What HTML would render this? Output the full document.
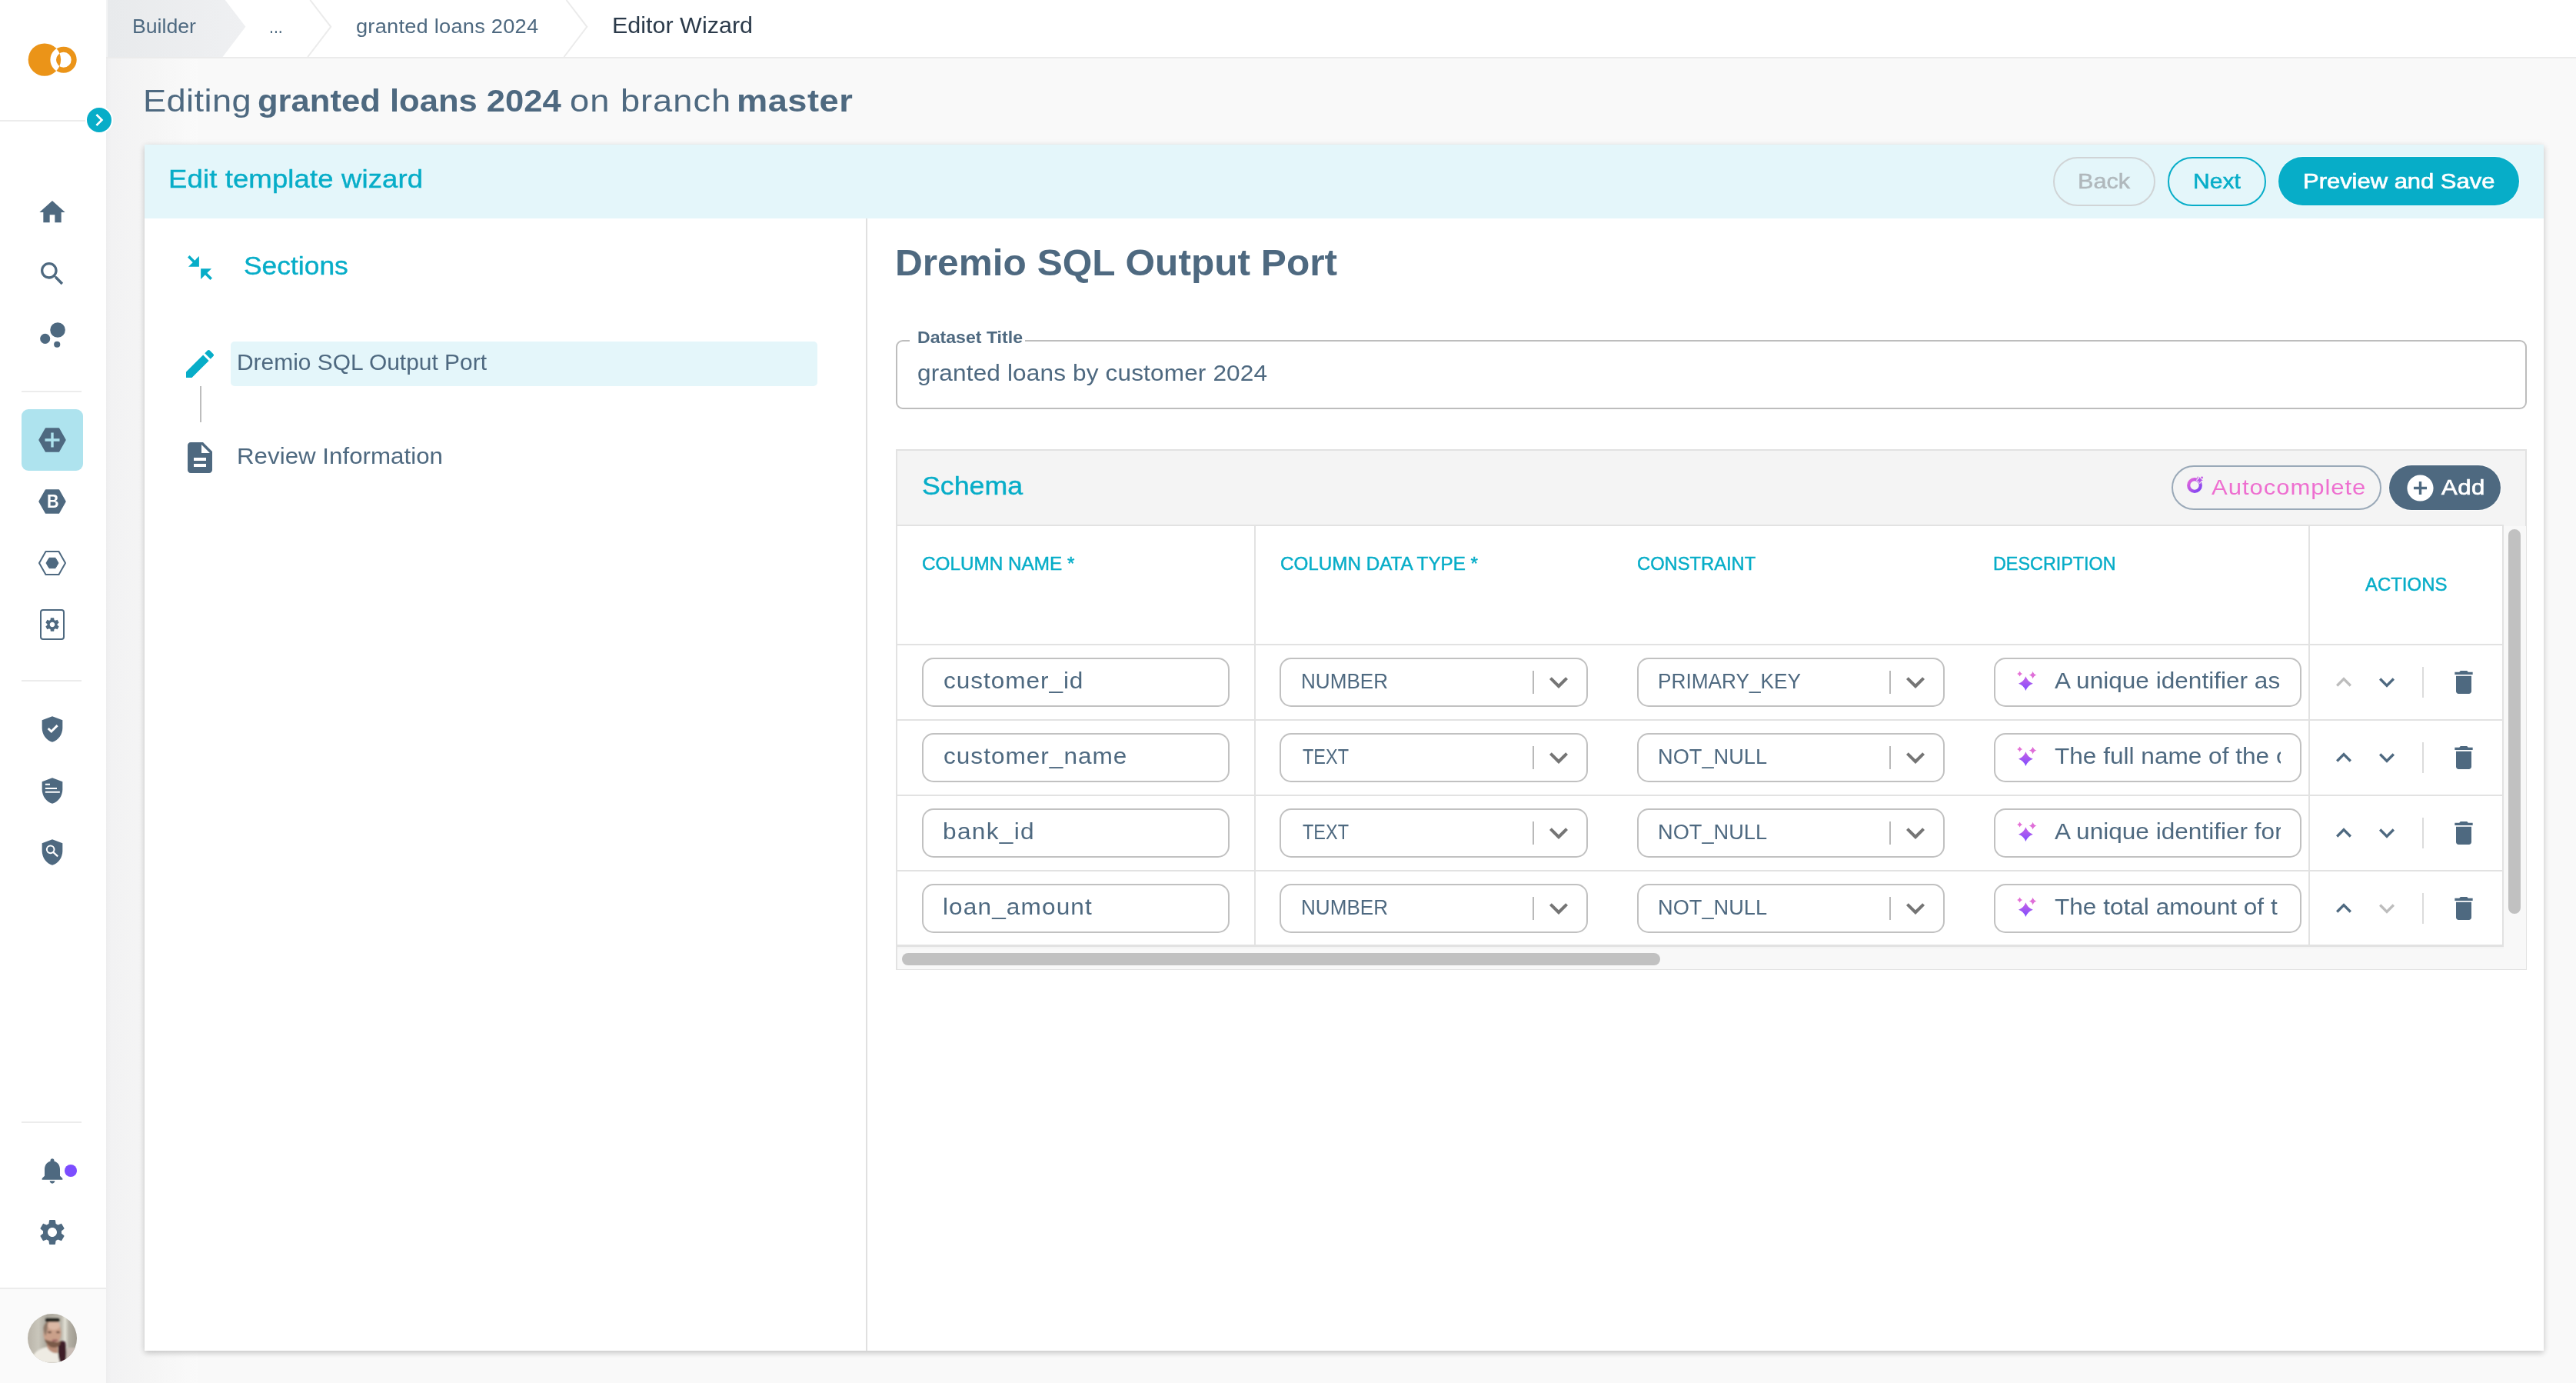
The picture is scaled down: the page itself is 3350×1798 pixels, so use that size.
<!DOCTYPE html>
<html lang="en">
<head>
<meta charset="utf-8">
<title>Editor Wizard</title>
<style>
html,body{margin:0;padding:0;}
body{width:3350px;height:1798px;overflow:hidden;position:relative;background:#f9f9f9;font-family:"Liberation Sans",sans-serif;color:#4e6980;}
.a{position:absolute;box-sizing:border-box;}
.t{position:absolute;white-space:nowrap;line-height:1;color:#4e6980;transform-origin:0 50%;}
svg{position:absolute;display:block;overflow:visible;}
.ic{fill:#4e6980;}
/* sidebar */
#side{left:0;top:0;width:138px;height:1798px;background:#fff;}
#sideshadow{left:138px;top:76px;width:120px;height:1722px;background:linear-gradient(90deg,#eeeeef 0,#f2f2f3 6%,#f5f5f5 45%,#fafafa 100%);}
#sidefoot{left:0;top:1674px;width:138px;height:124px;background:#fafafa;border-top:2px solid #ececec;}
.sdiv{left:28px;width:78px;height:2px;background:#ececec;}
#active{left:28px;top:532px;width:80px;height:80px;border-radius:9px;background:#aee3ee;}
#toggle{left:111px;top:138px;width:36px;height:36px;border-radius:50%;background:#07adc8;border:2px solid #fff;}
#avatar{left:36px;top:1708px;width:64px;height:64px;border-radius:50%;overflow:hidden;background:#b9b3a8;}
/* breadcrumb */
#crumb{left:138px;top:0;width:3212px;height:76px;background:#fff;border-bottom:2px solid #ebebeb;}
/* card */
#card{left:188px;top:188px;width:3120px;height:1568px;background:#fff;box-shadow:0 3px 7px rgba(0,0,0,.16),0 1px 10px rgba(0,0,0,.07);}
#cardhead{left:188px;top:188px;width:3120px;height:96px;background:#e4f6fa;}
#vdiv{left:1126px;top:284px;width:2px;height:1472px;background:#e0e0e0;}
.btn{border-radius:40px;height:64px;top:204px;}
#bback{left:2670px;width:133px;border:2px solid #d0d4d6;}
#bnext{left:2819px;width:128px;border:2px solid #07adc8;}
#bsave{left:2963px;width:313px;background:#07adc8;height:63px;box-shadow:0 0 0 1px #eefafc;}
/* sections */
#hl{left:300px;top:444px;width:763px;height:58px;border-radius:5px;background:#e4f6fa;}
#conn{left:260px;top:502px;width:2px;height:47px;background:#bdbdbd;}
/* form */
#dsbox{left:1165px;top:442px;width:2121px;height:90px;border:2px solid #bdbdbd;border-radius:9px;}
#dsnotch{left:1183px;top:440px;width:150px;height:6px;background:#fff;}
#schema{left:1165px;top:584px;width:2121px;height:677px;background:#f4f4f4;border:2px solid #e2e2e2;}
#grid{left:1167px;top:682px;width:2089px;height:549px;background:#fff;border-top:2px solid #e2e2e2;border-bottom:3px solid #e2e2e2;border-right:2px solid #e2e2e2;}
#hsb{left:1167px;top:1233px;width:2118px;height:27px;background:#f8f8f8;}
#hthumb{left:1173px;top:1239px;width:986px;height:16px;border-radius:8px;background:#c1c1c1;}
#vsb{left:3256px;top:684px;width:29px;height:549px;background:#f8f8f8;}
#vthumb{left:3262px;top:688px;width:16px;height:500px;border-radius:8px;background:#c1c1c1;}
.hline{left:1167px;width:2088px;height:2px;background:#e2e2e2;}
.vline{top:684px;width:2px;height:546px;background:#e2e2e2;}
.inp{height:64px;border:2px solid #c1c1c1;border-radius:15px;background:#fff;}
.sep{width:2px;height:30px;background:#b9b9b9;}
.asep{width:2px;height:40px;background:#dcdcdc;left:3150px;}
#bauto{left:2824px;top:605px;width:273px;height:58px;border-radius:30px;border:2px solid #9aa9b8;}
#badd{left:3107px;top:605px;width:145px;height:58px;border-radius:30px;background:#4e6980;box-shadow:0 0 0 1px #fbfbfb;}
#texts{position:absolute;left:0;top:0;width:3350px;height:1798px;will-change:transform;}

</style>
</head>
<body>
<div id="sideshadow" class="a"></div>
<div id="crumb" class="a"></div>
<svg width="900" height="76" viewBox="0 0 900 76" style="left:138px;top:0"><defs><linearGradient id="cg" x1="0" x2="1" y1="0" y2="0"><stop offset="0" stop-color="#e8eaec"/><stop offset="1" stop-color="#eff0f2"/></linearGradient></defs><rect x="0" y="0" width="2" height="74" fill="#f3f4f5"/><polygon points="2,0 154.7,0 181.4,34.8 151.6,74 2,74" fill="url(#cg)"/><polyline points="265.3,0 292.2,34.8 262.2,74" fill="none" stroke="#ebebeb" stroke-width="2"/><polyline points="598.5,0 625.3,34.8 595.5,74" fill="none" stroke="#ebebeb" stroke-width="2"/></svg>
<div id="side" class="a"></div>
<div id="sidefoot" class="a"></div>
<div class="a" style="left:0;top:156px;width:138px;height:2px;background:#ececec"></div>
<svg width="70" height="50" viewBox="30 52 70 50" style="left:30px;top:52px"><defs><clipPath id="lc"><circle cx="57.9" cy="77.6" r="21.2"/></clipPath></defs><circle cx="57.9" cy="77.6" r="21.2" fill="#eb9418"/><circle cx="82.7" cy="77.8" r="13.5" fill="none" stroke="#eb9418" stroke-width="7"/><circle cx="82.7" cy="77.8" r="13.5" fill="none" stroke="#fff" stroke-width="7.6" clip-path="url(#lc)"/></svg>
<div id="toggle" class="a"></div>
<svg class="ic" viewBox="0 0 24 24" width="32" height="32" style="left:113.2px;top:140.0px"><path d="M10 6 8.59 7.41 13.17 12l-4.58 4.59L10 18l6-6z" style="fill:#fff"/></svg>
<div class="a sdiv" style="top:508px"></div>
<div class="a sdiv" style="top:884px"></div>
<div class="a sdiv" style="top:1458px"></div>
<div id="active" class="a"></div>
<svg class="ic" viewBox="0 0 24 24" width="40" height="40" style="left:48.0px;top:256.0px"><path d="M10 20v-6h4v6h5v-8h3L12 3 2 12h3v8z"/></svg>
<svg class="ic" viewBox="0 0 24 24" width="40" height="40" style="left:48.0px;top:336.0px"><path d="M15.5 14h-.79l-.28-.27C15.41 12.59 16 11.11 16 9.5 16 5.91 13.09 3 9.5 3S3 5.91 3 9.5 5.91 16 9.5 16c1.61 0 3.09-.59 4.23-1.57l.27.28v.79l5 4.99L20.49 19l-4.99-5zm-6 0C7.01 14 5 11.99 5 9.5S7.01 5 9.5 5 14 7.01 14 9.5 11.99 14 9.5 14z"/></svg>
<svg class="ic" viewBox="0 0 24 24" width="49" height="49" style="left:43.7px;top:411.2px"><circle cx="7.2" cy="14.4" r="3.2"/><circle cx="14.8" cy="18" r="2"/><circle cx="15.2" cy="8.8" r="4.8"/></svg>
<svg width="44" height="40" viewBox="46 552 44 40" style="left:46px;top:552px"><polygon points="51.3,572 59.65,557.3 76.35,557.3 84.7,572 76.35,586.7 59.65,586.7" fill="#4e6980" stroke="#4e6980" stroke-width="2" stroke-linejoin="round"/><path d="M66.3 562.5h3.4v7.8h7.8v3.4h-7.8v7.8h-3.4v-7.8h-7.8v-3.4h7.8z" fill="#aee3ee"/></svg>
<svg width="44" height="40" viewBox="46 632 44 40" style="left:46px;top:632px"><polygon points="51.3,652 59.65,637.3 76.35,637.3 84.7,652 76.35,666.7 59.65,666.7" fill="#4e6980" stroke="#4e6980" stroke-width="2" stroke-linejoin="round"/></svg>
<svg width="44" height="40" viewBox="46 712 44 40" style="left:46px;top:712px"><polygon points="51.0,732 59.5,717.0 76.5,717.0 85.0,732 76.5,747.0 59.5,747.0" fill="#fff" stroke="#4e6980" stroke-width="2" stroke-linejoin="round"/><polygon points="60.0,732 64.0,725.3 72.0,725.3 76.0,732 72.0,738.7 64.0,738.7" fill="#4e6980" stroke="#4e6980" stroke-width="1" stroke-linejoin="round"/></svg>
<div class="a" style="left:52px;top:792px;width:32px;height:40px;border:2px solid #4e6980;border-radius:4px"></div>
<svg class="ic" viewBox="0 0 24 24" width="22" height="22" style="left:57.0px;top:801.0px"><path d="M19.14 12.94c.04-.3.06-.61.06-.94 0-.32-.02-.64-.07-.94l2.03-1.58c.18-.14.23-.41.12-.61l-1.92-3.32c-.12-.22-.37-.29-.59-.22l-2.39.96c-.5-.38-1.03-.7-1.62-.94l-.36-2.54c-.04-.24-.24-.41-.48-.41h-3.84c-.24 0-.43.17-.47.41l-.36 2.54c-.59.24-1.13.57-1.62.94l-2.39-.96c-.22-.08-.47 0-.59.22L2.74 8.87c-.12.21-.08.47.12.61l2.03 1.58c-.05.3-.09.63-.09.94s.02.64.07.94l-2.03 1.58c-.18.14-.23.41-.12.61l1.92 3.32c.12.22.37.29.59.22l2.39-.96c.5.38 1.03.7 1.62.94l.36 2.54c.05.24.24.41.48.41h3.84c.24 0 .44-.17.47-.41l.36-2.54c.59-.24 1.13-.56 1.62-.94l2.39.96c.22.08.47 0 .59-.22l1.92-3.32c.12-.22.07-.47-.12-.61l-2.01-1.58zM12 15.6c-1.98 0-3.6-1.62-3.6-3.6s1.62-3.6 3.6-3.6 3.6 1.62 3.6 3.6-1.62 3.6-3.6 3.6z"/></svg>
<svg class="ic" viewBox="0 0 24 24" width="40" height="40" style="left:48.0px;top:928.0px"><path d="M12 2 4 5v6.09c0 5.050 3.410 9.760 8 10.910 4.590-1.150 8-5.860 8-10.910V5l-8-3zm-.76 13.040L8.200 12l1.210-1.210 1.820 1.820 4.140-4.140 1.210 1.210-5.340 5.360z"/></svg>
<svg class="ic" viewBox="0 0 24 24" width="40" height="40" style="left:48px;top:1008px"><path d="M12 2 4 5v6.09c0 5.05 3.41 9.76 8 10.91 4.59-1.15 8-5.86 8-10.91V5l-8-3z"/><path d="M6.500 6.400h3.700v1.200H6.500zM6.500 9.600h9.100v1.200H6.500zM6.500 12.400h11.400v1.200H6.500z" style="fill:#fff"/></svg>
<svg class="ic" viewBox="0 0 24 24" width="40" height="40" style="left:48px;top:1088px"><path d="M12 2 4 5v6.09c0 5.05 3.41 9.76 8 10.91 4.59-1.15 8-5.86 8-10.91V5l-8-3z"/><circle cx="10.600" cy="9.800" r="2.900" stroke="#fff" stroke-width="1.200" style="fill:none"/><path d="M12.700 11.900l3.600 3.300" stroke="#fff" stroke-width="1.300" style="fill:none"/></svg>
<svg class="ic" viewBox="0 0 24 24" width="40" height="40" style="left:48.0px;top:1502.0px"><path d="M12 22c1.1 0 2-.9 2-2h-4c0 1.1.89 2 2 2zm6-6v-5c0-3.07-1.64-5.64-4.5-6.32V4c0-.83-.67-1.5-1.5-1.5s-1.5.67-1.5 1.5v.68C7.63 5.36 6 7.92 6 11v5l-2 2v1h16v-1l-2-2z"/></svg>
<div class="a" style="left:84px;top:1514px;width:16px;height:16px;border-radius:50%;background:#7c4dff"></div>
<svg class="ic" viewBox="0 0 24 24" width="40" height="40" style="left:48.0px;top:1582.0px"><path d="M19.14 12.94c.04-.3.06-.61.06-.94 0-.32-.02-.64-.07-.94l2.03-1.58c.18-.14.23-.41.12-.61l-1.92-3.32c-.12-.22-.37-.29-.59-.22l-2.39.96c-.5-.38-1.03-.7-1.62-.94l-.36-2.54c-.04-.24-.24-.41-.48-.41h-3.84c-.24 0-.43.17-.47.41l-.36 2.54c-.59.24-1.13.57-1.62.94l-2.39-.96c-.22-.08-.47 0-.59.22L2.74 8.87c-.12.21-.08.47.12.61l2.03 1.58c-.05.3-.09.63-.09.94s.02.64.07.94l-2.03 1.58c-.18.14-.23.41-.12.61l1.92 3.32c.12.22.37.29.59.22l2.39-.96c.5.38 1.03.7 1.62.94l.36 2.54c.05.24.24.41.48.41h3.84c.24 0 .44-.17.47-.41l.36-2.54c.59-.24 1.13-.56 1.62-.94l2.39.96c.22.08.47 0 .59-.22l1.92-3.32c.12-.22.07-.47-.12-.61l-2.01-1.58zM12 15.6c-1.98 0-3.6-1.62-3.6-3.6s1.62-3.6 3.6-3.6 3.6 1.62 3.6 3.6-1.62 3.6-3.6 3.6z"/></svg>
<svg width="64" height="64" viewBox="0 0 64 64" style="left:36px;top:1708px"><defs><clipPath id="avc"><circle cx="32" cy="32" r="32"/></clipPath><filter id="avb" x="-10%" y="-10%" width="120%" height="120%"><feGaussianBlur stdDeviation="1.1"/></filter><linearGradient id="avg" x1="0" x2="1" y1="0" y2="0"><stop offset="0" stop-color="#b9b4a9"/><stop offset=".22" stop-color="#c9c6bb"/><stop offset=".4" stop-color="#aaa69b"/><stop offset=".68" stop-color="#bcb8ad"/><stop offset=".76" stop-color="#e0dfd4"/><stop offset=".84" stop-color="#b3afa4"/><stop offset="1" stop-color="#9f9a90"/></linearGradient></defs><g clip-path="url(#avc)"><rect width="64" height="64" fill="url(#avg)"/><g filter="url(#avb)"><rect x="44" y="44" width="22" height="22" fill="#c9bdb6"/><path d="M40 37c3-2 7-2 9 0c1 8 2 16 0 25l-9 4z" fill="#3d1f27"/><rect x="25" y="38" width="14" height="14" fill="#b98d78"/><path d="M4 64C6 52 12 46 25 43c3 6 9 9 14 8l3 13z" fill="#eeebe3"/><ellipse cx="32" cy="25" rx="11.5" ry="16" fill="#caa08a"/><ellipse cx="34" cy="15" rx="8" ry="6" fill="#dbb8a4"/><path d="M20.500 18c1-4 3-7 6-9l-1 12-2 8c-2-3-3-7-3-11z" fill="#8f7868"/><path d="M22 33c2 6 6 11 12 11s9-4 9-9c-3 3-6 2-9 1-4 0-8-1-12-3z" fill="#7a5a49"/><ellipse cx="35.500" cy="34.500" rx="4" ry="1.600" fill="#a06a66"/><ellipse cx="28.500" cy="24" rx="2.600" ry="1.200" fill="#5d4236"/><ellipse cx="39.500" cy="24" rx="2.400" ry="1.200" fill="#5d4236"/><rect x="23" y="6" width="18.500" height="4.600" rx="2" fill="#23221f"/></g></g></svg>
<div id="card" class="a"></div>
<div id="cardhead" class="a"></div>
<div id="vdiv" class="a"></div>
<div id="bback" class="a btn"></div><div id="bnext" class="a btn"></div><div id="bsave" class="a btn"></div>
<svg width="40" height="40" viewBox="-20 -20 40 40" style="left:240px;top:328px"><g fill="#07adc8" stroke="#07adc8"><polygon points="-1.1,-15 -1.1,-1.2 -15,-1.2" stroke="none"/><path d="M-14.7 -14.7L-6 -6" stroke-width="3.6" fill="none"/><polygon points="1.1,15 1.1,1.200 15,1.200" stroke="none"/><path d="M14.7 14.7L6 6" stroke-width="3.6" fill="none"/></g></svg>
<div id="hl" class="a"></div>
<svg class="ic" viewBox="0 0 24 24" width="48" height="48" style="left:236.0px;top:448.7px"><path d="M3 17.25V21h3.75L17.81 9.94l-3.75-3.75L3 17.25zM20.71 7.04c.39-.39.39-1.02 0-1.41l-2.34-2.34c-.39-.39-1.02-.39-1.41 0l-1.83 1.83 3.75 3.75 1.83-1.83z" style="fill:#07adc8"/></svg>
<div id="conn" class="a"></div>
<svg class="ic" viewBox="0 0 24 24" width="48" height="48" style="left:236.0px;top:571.0px"><path d="M14 2H6c-1.1 0-1.99.9-1.99 2L4 20c0 1.1.89 2 1.99 2H18c1.1 0 2-.9 2-2V8l-6-6zm2 16H8v-2h8v2zm0-4H8v-2h8v2zm-3-5V3.5L18.5 9H13z"/></svg>
<div id="dsbox" class="a"></div><div id="dsnotch" class="a"></div>
<div id="schema" class="a"></div>
<div id="bauto" class="a"></div><div id="badd" class="a"></div>
<svg class="ic" viewBox="0 0 24 24" width="41" height="41" style="left:3126.5px;top:613.6px"><path d="M12 2C6.48 2 2 6.48 2 12s4.48 10 10 10 10-4.48 10-10S17.52 2 12 2zm5 11h-4v4h-2v-4H7v-2h4V7h2v4h4v2z" style="fill:#fff"/></svg>
<svg width="40" height="40" viewBox="2834 611 40 40" style="left:2834px;top:611px"><defs><linearGradient id="ag" x1="0" x2="1" y1="0" y2="1"><stop offset="0.1" stop-color="#dc62dc"/><stop offset="0.9" stop-color="#8446f2"/></linearGradient></defs><circle cx="2854" cy="631" r="7.8" fill="none" stroke="url(#ag)" stroke-width="4.2"/><path d="M2860.7 620.00Q2861.56 623.44 2865.00 624.3Q2861.56 625.16 2860.7 628.60Q2859.84 625.16 2856.40 624.3Q2859.84 623.44 2860.7 620.00z" fill="#b455ea" stroke="#f4f4f4" stroke-width="1.3" paint-order="stroke"/><circle cx="2858.2" cy="620.4" r="0.9" fill="#d264e0"/><circle cx="2863.6" cy="620.9" r="1.4" fill="#c45ce6"/></svg>
<div id="grid" class="a"></div>
<div id="hsb" class="a"></div><div id="hthumb" class="a"></div>
<div id="vsb" class="a"></div><div id="vthumb" class="a"></div>
<div class="a hline" style="top:837px"></div>
<div class="a hline" style="top:935px"></div>
<div class="a hline" style="top:1033px"></div>
<div class="a hline" style="top:1131px"></div>
<div class="a vline" style="left:1631px"></div><div class="a vline" style="left:3002px"></div>
<svg width="0" height="0" style="left:0;top:0"><defs><linearGradient id="sg" x1="0" x2="0" y1="0" y2="1"><stop offset="0" stop-color="#c862e6"/><stop offset="1" stop-color="#7c4dff"/></linearGradient></defs></svg>
<div class="a inp" style="left:1199px;top:855px;width:400px"></div>
<div class="a inp" style="left:1664px;top:855px;width:401px"></div>
<div class="a inp" style="left:2129px;top:855px;width:400px"></div>
<div class="a inp" style="left:2593px;top:855px;width:400px"></div>
<div class="a sep" style="left:1993px;top:872px"></div>
<div class="a sep" style="left:2457px;top:872px"></div>
<svg class="ic" viewBox="0 0 24 24" width="48" height="48" style="left:2003.0px;top:862.9px"><path d="M7.41 8.59 12 13.17l4.59-4.58L18 10l-6 6-6-6 1.41-1.41z" style="fill:#757575"/></svg>
<svg class="ic" viewBox="0 0 24 24" width="48" height="48" style="left:2467.2px;top:862.9px"><path d="M7.41 8.59 12 13.17l4.59-4.58L18 10l-6 6-6-6 1.41-1.41z" style="fill:#757575"/></svg>
<svg width="30" height="30" viewBox="0 0 30 30" style="left:2620px;top:871.4px"><path d="M14.4 8.30Q16.75 15.35 23.80 17.7Q16.75 20.05 14.4 27.10Q12.05 20.05 5.00 17.7Q12.05 15.35 14.4 8.30z" fill="url(#sg)"/><path d="M6.6 1.60Q7.47 4.22 10.10 5.1Q7.47 5.97 6.6 8.60Q5.72 5.97 3.10 5.1Q5.72 4.22 6.6 1.60z" fill="#e570d6"/><path d="M23.6 1.70Q24.68 5.52 28.50 6.6Q24.68 7.68 23.6 11.50Q22.52 7.68 18.70 6.6Q22.52 5.52 23.6 1.70z" fill="#df6fd8"/></svg>
<svg class="ic" viewBox="0 0 24 24" width="40" height="40" style="left:3028.0px;top:867.0px"><path d="M7.41 15.41 12 10.83l4.59 4.58L18 14l-6-6-6 6z" style="fill:#bdbdbd"/></svg>
<svg class="ic" viewBox="0 0 24 24" width="40" height="40" style="left:3084.0px;top:867.0px"><path d="M7.41 8.59 12 13.17l4.59-4.58L18 10l-6 6-6-6 1.41-1.41z"/></svg>
<div class="a asep" style="top:867px"></div>
<svg class="ic" viewBox="0 0 24 24" width="40" height="40" style="left:3184.0px;top:867.0px"><path d="M6 19c0 1.1.9 2 2 2h8c1.1 0 2-.9 2-2V7H6v12zM19 4h-3.5l-1-1h-5l-1 1H5v2h14V4z"/></svg>
<div class="a inp" style="left:1199px;top:953px;width:400px"></div>
<div class="a inp" style="left:1664px;top:953px;width:401px"></div>
<div class="a inp" style="left:2129px;top:953px;width:400px"></div>
<div class="a inp" style="left:2593px;top:953px;width:400px"></div>
<div class="a sep" style="left:1993px;top:970px"></div>
<div class="a sep" style="left:2457px;top:970px"></div>
<svg class="ic" viewBox="0 0 24 24" width="48" height="48" style="left:2003.0px;top:960.9px"><path d="M7.41 8.59 12 13.17l4.59-4.58L18 10l-6 6-6-6 1.41-1.41z" style="fill:#757575"/></svg>
<svg class="ic" viewBox="0 0 24 24" width="48" height="48" style="left:2467.2px;top:960.9px"><path d="M7.41 8.59 12 13.17l4.59-4.58L18 10l-6 6-6-6 1.41-1.41z" style="fill:#757575"/></svg>
<svg width="30" height="30" viewBox="0 0 30 30" style="left:2620px;top:969.4px"><path d="M14.4 8.30Q16.75 15.35 23.80 17.7Q16.75 20.05 14.4 27.10Q12.05 20.05 5.00 17.7Q12.05 15.35 14.4 8.30z" fill="url(#sg)"/><path d="M6.6 1.60Q7.47 4.22 10.10 5.1Q7.47 5.97 6.6 8.60Q5.72 5.97 3.10 5.1Q5.72 4.22 6.6 1.60z" fill="#e570d6"/><path d="M23.6 1.70Q24.68 5.52 28.50 6.6Q24.68 7.68 23.6 11.50Q22.52 7.68 18.70 6.6Q22.52 5.52 23.6 1.70z" fill="#df6fd8"/></svg>
<svg class="ic" viewBox="0 0 24 24" width="40" height="40" style="left:3028.0px;top:965.0px"><path d="M7.41 15.41 12 10.83l4.59 4.58L18 14l-6-6-6 6z"/></svg>
<svg class="ic" viewBox="0 0 24 24" width="40" height="40" style="left:3084.0px;top:965.0px"><path d="M7.41 8.59 12 13.17l4.59-4.58L18 10l-6 6-6-6 1.41-1.41z"/></svg>
<div class="a asep" style="top:965px"></div>
<svg class="ic" viewBox="0 0 24 24" width="40" height="40" style="left:3184.0px;top:965.0px"><path d="M6 19c0 1.1.9 2 2 2h8c1.1 0 2-.9 2-2V7H6v12zM19 4h-3.5l-1-1h-5l-1 1H5v2h14V4z"/></svg>
<div class="a inp" style="left:1199px;top:1051px;width:400px"></div>
<div class="a inp" style="left:1664px;top:1051px;width:401px"></div>
<div class="a inp" style="left:2129px;top:1051px;width:400px"></div>
<div class="a inp" style="left:2593px;top:1051px;width:400px"></div>
<div class="a sep" style="left:1993px;top:1068px"></div>
<div class="a sep" style="left:2457px;top:1068px"></div>
<svg class="ic" viewBox="0 0 24 24" width="48" height="48" style="left:2003.0px;top:1058.9px"><path d="M7.41 8.59 12 13.17l4.59-4.58L18 10l-6 6-6-6 1.41-1.41z" style="fill:#757575"/></svg>
<svg class="ic" viewBox="0 0 24 24" width="48" height="48" style="left:2467.2px;top:1058.9px"><path d="M7.41 8.59 12 13.17l4.59-4.58L18 10l-6 6-6-6 1.41-1.41z" style="fill:#757575"/></svg>
<svg width="30" height="30" viewBox="0 0 30 30" style="left:2620px;top:1067.4px"><path d="M14.4 8.30Q16.75 15.35 23.80 17.7Q16.75 20.05 14.4 27.10Q12.05 20.05 5.00 17.7Q12.05 15.35 14.4 8.30z" fill="url(#sg)"/><path d="M6.6 1.60Q7.47 4.22 10.10 5.1Q7.47 5.97 6.6 8.60Q5.72 5.97 3.10 5.1Q5.72 4.22 6.6 1.60z" fill="#e570d6"/><path d="M23.6 1.70Q24.68 5.52 28.50 6.6Q24.68 7.68 23.6 11.50Q22.52 7.68 18.70 6.6Q22.52 5.52 23.6 1.70z" fill="#df6fd8"/></svg>
<svg class="ic" viewBox="0 0 24 24" width="40" height="40" style="left:3028.0px;top:1063.0px"><path d="M7.41 15.41 12 10.83l4.59 4.58L18 14l-6-6-6 6z"/></svg>
<svg class="ic" viewBox="0 0 24 24" width="40" height="40" style="left:3084.0px;top:1063.0px"><path d="M7.41 8.59 12 13.17l4.59-4.58L18 10l-6 6-6-6 1.41-1.41z"/></svg>
<div class="a asep" style="top:1063px"></div>
<svg class="ic" viewBox="0 0 24 24" width="40" height="40" style="left:3184.0px;top:1063.0px"><path d="M6 19c0 1.1.9 2 2 2h8c1.1 0 2-.9 2-2V7H6v12zM19 4h-3.5l-1-1h-5l-1 1H5v2h14V4z"/></svg>
<div class="a inp" style="left:1199px;top:1149px;width:400px"></div>
<div class="a inp" style="left:1664px;top:1149px;width:401px"></div>
<div class="a inp" style="left:2129px;top:1149px;width:400px"></div>
<div class="a inp" style="left:2593px;top:1149px;width:400px"></div>
<div class="a sep" style="left:1993px;top:1166px"></div>
<div class="a sep" style="left:2457px;top:1166px"></div>
<svg class="ic" viewBox="0 0 24 24" width="48" height="48" style="left:2003.0px;top:1156.9px"><path d="M7.41 8.59 12 13.17l4.59-4.58L18 10l-6 6-6-6 1.41-1.41z" style="fill:#757575"/></svg>
<svg class="ic" viewBox="0 0 24 24" width="48" height="48" style="left:2467.2px;top:1156.9px"><path d="M7.41 8.59 12 13.17l4.59-4.58L18 10l-6 6-6-6 1.41-1.41z" style="fill:#757575"/></svg>
<svg width="30" height="30" viewBox="0 0 30 30" style="left:2620px;top:1165.4px"><path d="M14.4 8.30Q16.75 15.35 23.80 17.7Q16.75 20.05 14.4 27.10Q12.05 20.05 5.00 17.7Q12.05 15.35 14.4 8.30z" fill="url(#sg)"/><path d="M6.6 1.60Q7.47 4.22 10.10 5.1Q7.47 5.97 6.6 8.60Q5.72 5.97 3.10 5.1Q5.72 4.22 6.6 1.60z" fill="#e570d6"/><path d="M23.6 1.70Q24.68 5.52 28.50 6.6Q24.68 7.68 23.6 11.50Q22.52 7.68 18.70 6.6Q22.52 5.52 23.6 1.70z" fill="#df6fd8"/></svg>
<svg class="ic" viewBox="0 0 24 24" width="40" height="40" style="left:3028.0px;top:1161.0px"><path d="M7.41 15.41 12 10.83l4.59 4.58L18 14l-6-6-6 6z"/></svg>
<svg class="ic" viewBox="0 0 24 24" width="40" height="40" style="left:3084.0px;top:1161.0px"><path d="M7.41 8.59 12 13.17l4.59-4.58L18 10l-6 6-6-6 1.41-1.41z" style="fill:#bdbdbd"/></svg>
<div class="a asep" style="top:1161px"></div>
<svg class="ic" viewBox="0 0 24 24" width="40" height="40" style="left:3184.0px;top:1161.0px"><path d="M6 19c0 1.1.9 2 2 2h8c1.1 0 2-.9 2-2V7H6v12zM19 4h-3.5l-1-1h-5l-1 1H5v2h14V4z"/></svg>
<div id="texts">
<span class="t" style="left:171.7px;top:21.6px;font-size:25px;transform:scaleX(1.0665);">Builder</span>
<span class="t" style="left:350.3px;top:21.7px;font-size:25px;transform:scaleX(0.8540);">...</span>
<span class="t" style="left:462.9px;top:21.8px;font-size:25px;letter-spacing:0.20px;transform:scaleX(1.0900);">granted loans 2024</span>
<span class="t" style="left:796.0px;top:19.2px;font-size:29px;color:#2b3a4a;transform:scaleX(1.0514);">Editor Wizard</span>
<span class="t" style="left:61.0px;top:640.0px;font-size:24px;font-weight:700;color:#ffffff;transform:scaleX(0.8995);">B</span>
<span class="t" style="left:186.1px;top:109.7px;font-size:41.5px;letter-spacing:0.35px;transform:scaleX(1.0900);">Editing</span>
<span class="t" style="left:334.5px;top:109.7px;font-size:41.5px;font-weight:700;transform:scaleX(1.0501);">granted loans 2024</span>
<span class="t" style="left:740.7px;top:109.7px;font-size:41.5px;letter-spacing:0.92px;transform:scaleX(1.0900);">on branch</span>
<span class="t" style="left:957.8px;top:109.7px;font-size:41.5px;font-weight:700;letter-spacing:0.44px;transform:scaleX(1.0900);">master</span>
<span class="t" style="left:218.5px;top:216.2px;font-size:33.5px;color:#07adc8;letter-spacing:0.11px;transform:scaleX(1.0900);-webkit-text-stroke:0.4px #07adc8;">Edit template wizard</span>
<span class="t" style="left:2701.7px;top:220.7px;font-size:28.5px;color:#b0b8bc;transform:scaleX(1.0761);-webkit-text-stroke:0.5px #b0b8bc;">Back</span>
<span class="t" style="left:2851.7px;top:220.7px;font-size:28.5px;color:#07adc8;transform:scaleX(1.0544);-webkit-text-stroke:0.5px #07adc8;">Next</span>
<span class="t" style="left:2994.6px;top:220.7px;font-size:28.5px;color:#ffffff;transform:scaleX(1.0857);-webkit-text-stroke:0.7px #ffffff;">Preview and Save</span>
<span class="t" style="left:316.7px;top:328.6px;font-size:33.5px;color:#07adc8;transform:scaleX(1.0568);-webkit-text-stroke:0.4px #07adc8;">Sections</span>
<span class="t" style="left:308.0px;top:457.2px;font-size:29px;transform:scaleX(1.0323);">Dremio SQL Output Port</span>
<span class="t" style="left:308.0px;top:579.4px;font-size:29px;transform:scaleX(1.0797);">Review Information</span>
<span class="t" style="left:1164.1px;top:316.7px;font-size:48.5px;font-weight:700;transform:scaleX(1.0227);">Dremio SQL Output Port</span>
<span class="t" style="left:1192.5px;top:428.5px;font-size:21.5px;font-weight:700;transform:scaleX(1.0748);">Dataset Title</span>
<span class="t" style="left:1192.5px;top:471.2px;font-size:29px;letter-spacing:0.11px;transform:scaleX(1.0900);">granted loans by customer 2024</span>
<span class="t" style="left:1199.3px;top:614.5px;font-size:33.5px;color:#07adc8;transform:scaleX(1.0675);-webkit-text-stroke:0.4px #07adc8;">Schema</span>
<span class="t" style="left:2876.4px;top:618.8px;font-size:28.5px;color:#ee6fd0;letter-spacing:0.87px;transform:scaleX(1.0900);">Autocomplete</span>
<span class="t" style="left:3175.2px;top:618.8px;font-size:28.5px;color:#ffffff;letter-spacing:0.51px;transform:scaleX(1.0900);-webkit-text-stroke:0.7px #ffffff;">Add</span>
<span class="t" style="left:1198.7px;top:720.7px;font-size:24px;color:#07adc8;transform:scaleX(1.0121);-webkit-text-stroke:0.45px #07adc8;">COLUMN NAME *</span>
<span class="t" style="left:1664.5px;top:720.7px;font-size:24px;color:#07adc8;transform:scaleX(1.0090);-webkit-text-stroke:0.45px #07adc8;">COLUMN DATA TYPE *</span>
<span class="t" style="left:2128.6px;top:720.7px;font-size:24px;color:#07adc8;transform:scaleX(0.9885);-webkit-text-stroke:0.45px #07adc8;">CONSTRAINT</span>
<span class="t" style="left:2591.5px;top:720.7px;font-size:24px;color:#07adc8;transform:scaleX(0.9731);-webkit-text-stroke:0.45px #07adc8;">DESCRIPTION</span>
<span class="t" style="left:3076.0px;top:748.2px;font-size:24px;color:#07adc8;transform:scaleX(0.9973);-webkit-text-stroke:0.45px #07adc8;">ACTIONS</span>
<span class="t" style="left:1226.6px;top:871.3px;font-size:29px;letter-spacing:0.85px;transform:scaleX(1.0900);">customer_id</span>
<span class="t" style="left:1691.5px;top:872.9px;font-size:27px;transform:scaleX(0.9657);">NUMBER</span>
<span class="t" style="left:2155.5px;top:872.9px;font-size:27px;transform:scaleX(0.9709);">PRIMARY_KEY</span>
<span class="t" style="left:2671.7px;top:871.3px;font-size:29px;transform:scaleX(1.0890);width:269.5px;overflow:hidden;">A unique identifier assigned to each customer</span>
<span class="t" style="left:1226.6px;top:969.3px;font-size:29px;letter-spacing:0.90px;transform:scaleX(1.0900);">customer_name</span>
<span class="t" style="left:1693.5px;top:970.9px;font-size:27px;transform:scaleX(0.8694);">TEXT</span>
<span class="t" style="left:2155.5px;top:970.9px;font-size:27px;transform:scaleX(1.0068);">NOT_NULL</span>
<span class="t" style="left:2671.7px;top:969.3px;font-size:29px;transform:scaleX(1.0890);width:269.5px;overflow:hidden;">The full name of the customer</span>
<span class="t" style="left:1225.6px;top:1067.3px;font-size:29px;letter-spacing:1.20px;transform:scaleX(1.0900);">bank_id</span>
<span class="t" style="left:1693.5px;top:1068.9px;font-size:27px;transform:scaleX(0.8694);">TEXT</span>
<span class="t" style="left:2155.5px;top:1068.9px;font-size:27px;transform:scaleX(1.0068);">NOT_NULL</span>
<span class="t" style="left:2671.7px;top:1067.3px;font-size:29px;transform:scaleX(1.0890);width:269.5px;overflow:hidden;">A unique identifier for the bank</span>
<span class="t" style="left:1225.6px;top:1165.3px;font-size:29px;letter-spacing:1.01px;transform:scaleX(1.0900);">loan_amount</span>
<span class="t" style="left:1691.5px;top:1166.9px;font-size:27px;transform:scaleX(0.9657);">NUMBER</span>
<span class="t" style="left:2155.5px;top:1166.9px;font-size:27px;transform:scaleX(1.0068);">NOT_NULL</span>
<span class="t" style="left:2671.7px;top:1165.3px;font-size:29px;transform:scaleX(1.0890);width:269.5px;overflow:hidden;">The total amount of t</span>
</div>
</body>
</html>
